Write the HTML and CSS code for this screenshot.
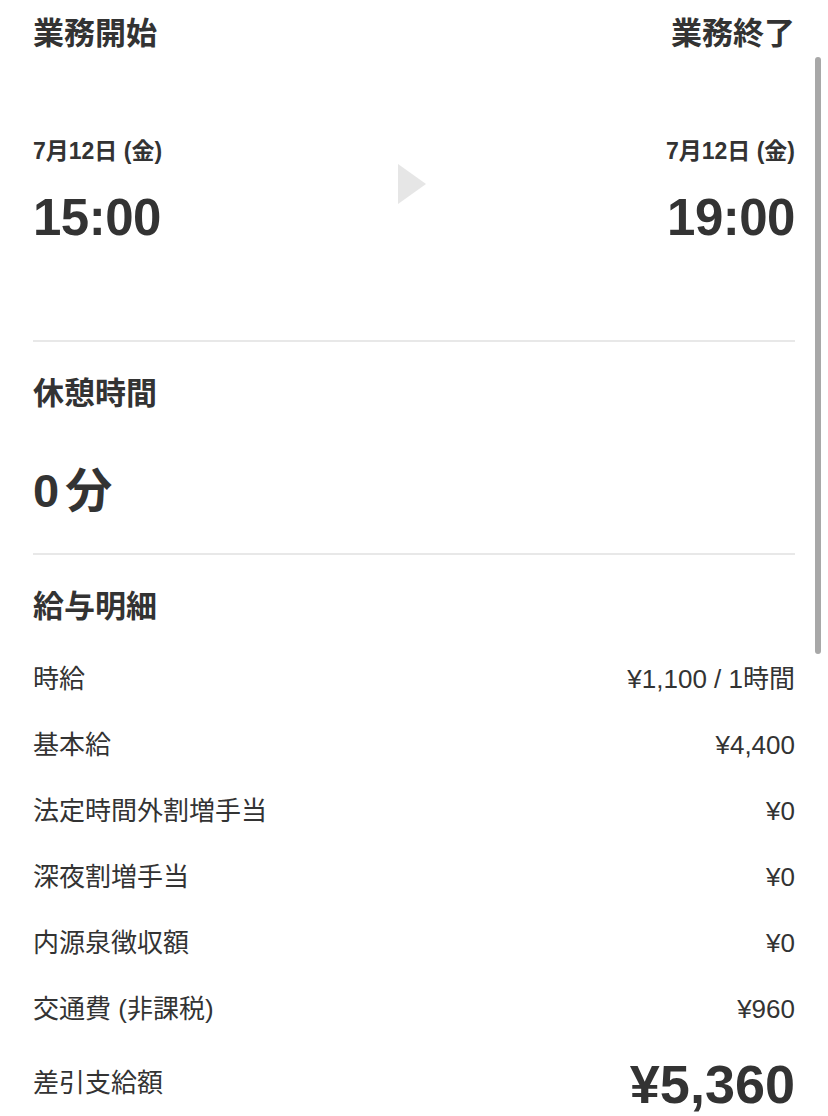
FILE: index.html
```html
<!DOCTYPE html>
<html lang="ja">
<head>
  <meta charset="UTF-8">
  <meta name="viewport" content="width=device-width, initial-scale=1.0">
  <title>勤務詳細</title>
  <link rel="stylesheet" href="styles.css">
</head>
<body>
  <div class="page">
    <section class="work">
      <div class="work-head">
        <h2>業務開始</h2>
        <h2>業務終了</h2>
      </div>
      <div class="work-times">
        <div class="time start">
          <div class="date">7月12日 (金)</div>
          <div class="clock">15:00</div>
        </div>
        <div class="arrow"></div>
        <div class="time end">
          <div class="date">7月12日 (金)</div>
          <div class="clock">19:00</div>
        </div>
      </div>
    </section>

    <section class="rest">
      <h2>休憩時間</h2>
      <div class="rest-value">0<span class="unit">分</span></div>
    </section>

    <section class="pay">
      <h2>給与明細</h2>
      <div class="pay-row"><span>時給</span><span>¥1,100 / 1時間</span></div>
      <div class="pay-row"><span>基本給</span><span>¥4,400</span></div>
      <div class="pay-row"><span>法定時間外割増手当</span><span>¥0</span></div>
      <div class="pay-row"><span>深夜割増手当</span><span>¥0</span></div>
      <div class="pay-row"><span>内源泉徴収額</span><span>¥0</span></div>
      <div class="pay-row"><span>交通費 (非課税)</span><span>¥960</span></div>
      <div class="pay-row total"><span>差引支給額</span><span class="total-value">¥5,360</span></div>
    </section>
  </div>
  <div class="scrollbar"></div>
</body>
</html>
```

FILE: styles.css
```css
body {
  margin: 0;
  background: #fff;
  color: #333;
  font-family: 'Liberation Sans', 'Noto Sans CJK JP', sans-serif;
  overflow: hidden;
}

.page {
  padding: 0 33px;
}

h2 {
  margin: 0;
  font-size: 31px;
  font-weight: bold;
  line-height: 1;
}

/* work start / end */
.work {
  padding-top: 18px;
  height: 322px;
  border-bottom: 2px solid #e8e8e8;
}

.work-head {
  display: flex;
  justify-content: space-between;
}

.work-times {
  display: flex;
  justify-content: space-between;
  align-items: flex-start;
  margin-top: 89px;
}

.time.end {
  text-align: right;
}

.date {
  font-size: 23px;
  font-weight: bold;
  line-height: 26px;
}

.clock {
  font-size: 51px;
  font-weight: bold;
  line-height: 1;
  margin-top: 28px;
  letter-spacing: -0.5px;
}

.arrow {
  width: 0;
  height: 0;
  margin-top: 26px;
  margin-right: 4px;
  border-top: 20px solid transparent;
  border-bottom: 20px solid transparent;
  border-left: 28px solid #e6e6e6;
}

/* rest time */
.rest {
  padding-top: 36px;
  height: 175px;
  border-bottom: 2px solid #e8e8e8;
}

.rest-value {
  margin-top: 58px;
  font-size: 47px;
  font-weight: bold;
  line-height: 1;
}

.unit {
  margin-left: 6px;
}

/* pay detail */
.pay {
  padding-top: 36px;
}

.pay h2 {
  margin-bottom: 24px;
}

.pay-row {
  display: flex;
  justify-content: space-between;
  align-items: baseline;
  height: 66px;
  line-height: 66px;
  font-size: 26px;
}

.pay-row.total {
  align-items: center;
  height: 84px;
  line-height: 1.2;
}

.total-value {
  font-size: 54px;
  font-weight: bold;
}

.scrollbar {
  position: fixed;
  top: 57px;
  left: 815px;
  width: 6px;
  height: 597px;
  border-radius: 3px;
  background: #a8a8a8;
}
```
